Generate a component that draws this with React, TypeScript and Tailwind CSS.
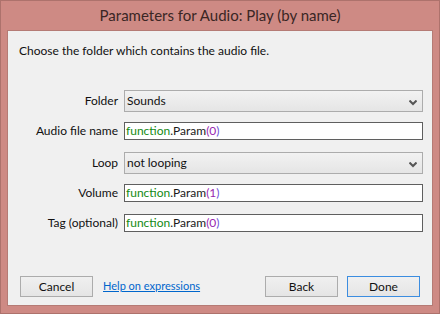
import React from 'react';

const font = { fontFamily: 'Lato, "Noto Sans", sans-serif' };

const Expr: React.FC<{ n: string }> = ({ n }) => (
  <span>
    <span className="text-[#138a13]">function</span>
    <span className="text-[#1a1a1a]">.Param</span>
    <span className="text-[#9a1fb0]">(</span>
    <span className="text-[#9a1fb0]">{n}</span>
    <span className="text-[#6b4fd8]">)</span>
  </span>
);

const Chevron = () => (
  <svg width="8" height="6" viewBox="0 0 8 6" className="absolute right-[5px] top-[9px]">
    <path d="M0.5 0.5 L4 4 L7.5 0.5" fill="none" stroke="#555" strokeWidth="2" />
  </svg>
);

const Label: React.FC<{ children: React.ReactNode }> = ({ children }) => (
  <div className="w-[110px] text-right text-[12px] text-[#111] leading-none">{children}</div>
);

const SelectBox: React.FC<{ value: string }> = ({ value }) => (
  <div className="relative ml-[6px] w-[299px] h-[22px] border border-[#acacac] bg-gradient-to-b from-[#f2f2f2] to-[#e5e5e5] flex items-center pl-[2px] text-[12px] text-[#111]">
    {value}
    <Chevron />
  </div>
);

const InputBox: React.FC<{ n: string }> = ({ n }) => (
  <div className="ml-[6px] w-[299px] h-[18px] border border-[#5f5f5f] bg-white flex items-center pl-[1px] text-[12px]">
    <Expr n={n} />
  </div>
);

const Button: React.FC<{ children: React.ReactNode; primary?: boolean; className?: string }> = ({ children, primary, className }) => (
  <div
    className={`w-[73px] h-[21px] flex items-center justify-center text-[12px] text-[#111] bg-gradient-to-b from-[#f0f0f0] to-[#e5e5e5] border ${
      primary ? 'border-[#3c8de0]' : 'border-[#acacac]'
    } ${className ?? ''}`}
  >
    {children}
  </div>
);

export default function App() {
  return (
    <div style={font} className="w-[440px] h-[314px] bg-[#ce8a84] border border-[#ad726c] flex flex-col">
      <div className="h-[29px] flex items-center justify-center text-[15px] text-[#3a2624]">
        Parameters for Audio: Play (by name)
      </div>
      <div className="ml-[6px] w-[426px] h-[276px] bg-[#f0f0f0] border border-[#b57b75] flex flex-col">
        <div className="pl-[11px] pt-[11px] text-[12px] text-[#111]">
          Choose the folder which contains the audio file.
        </div>

        <div className="mt-[30px] flex items-center">
          <Label>Folder</Label>
          <SelectBox value="Sounds" />
        </div>
        <div className="mt-[10px] flex items-center">
          <Label>Audio file name</Label>
          <InputBox n="0" />
        </div>
        <div className="mt-[12px] flex items-center">
          <Label>Loop</Label>
          <SelectBox value="not looping" />
        </div>
        <div className="mt-[10px] flex items-center">
          <Label>Volume</Label>
          <InputBox n="1" />
        </div>
        <div className="mt-[12px] flex items-center">
          <Label>Tag (optional)</Label>
          <InputBox n="0" />
        </div>

        <div className="mt-auto mb-[8px] flex items-center pl-[12px] pr-[12px]">
          <Button>Cancel</Button>
          <a className="ml-[10px] text-[11px] text-[#0066cc] underline">Help on expressions</a>
          <Button className="ml-auto">Back</Button>
          <Button primary className="ml-[9px]">Done</Button>
        </div>
      </div>
    </div>
  );
}
